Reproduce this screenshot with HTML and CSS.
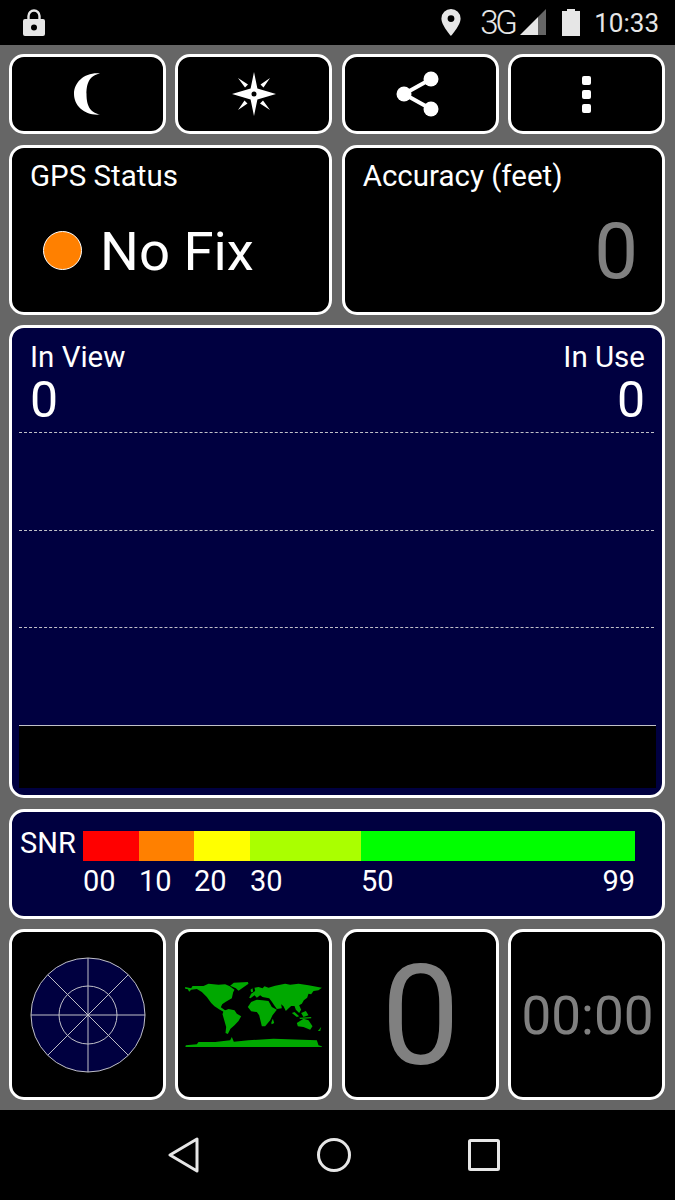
FILE: index.html
```html
<!DOCTYPE html>
<html lang="en">
<head>
    <meta charset="UTF-8">
    <meta name="viewport" content="width=device-width, initial-scale=1.0">
    <title>GPS Status</title>
    <link rel="stylesheet" href="styles.css">
</head>
<body>
    <div class="status-bar">
        <svg class="lock-icon" width="22" height="27" viewBox="0 0 22 27">
            <path fill="none" stroke="#e6e6e6" stroke-width="2.4" d="M5.500 11V7a5.500 5.500 0 0 1 11 0v4"/>
            <path fill="#e6e6e6" fill-rule="evenodd" d="M2 10h18a2 2 0 0 1 2 2v13a2 2 0 0 1-2 2H2a2 2 0 0 1-2-2V12a2 2 0 0 1 2-2zM11 15.500a3 3 0 1 0 0 6 3 3 0 0 0 0-6z"/>
        </svg>
        <svg class="pin-icon" width="20" height="27" viewBox="0 0 20 27">
            <path fill="#e6e6e6" fill-rule="evenodd" d="M10 0a9.600 9.600 0 0 1 9.600 9.600C19.600 16.500 10 27 10 27S.4 16.500.4 9.600A9.600 9.600 0 0 1 10 0zM10 6.200a3.400 3.400 0 1 0 0 6.800 3.400 3.400 0 0 0 0-6.800z"/>
        </svg>
        <span class="net-label">3G</span>
        <svg class="signal-icon" width="27" height="27" viewBox="0 0 27 27">
            <path fill="#666" d="M26 0v26H18V8z"/>
            <path fill="#e6e6e6" d="M18 8v18H0z"/>
        </svg>
        <svg class="battery-icon" width="18" height="27" viewBox="0 0 18 27">
            <path fill="#e6e6e6" d="M5 2V0h8v2h5v25H0V2z"/>
        </svg>
        <span class="clock">10:33</span>
    </div>

    <div class="main">
        <div class="card button-card">
            <svg width="30" height="42" viewBox="0 0 30 42">
                <path fill="#fff" d="M27 0.500C15 2.500 13.500 13 13.500 21S15 39.500 27 41.500C12 43 1 33 1 21S12-1 27 0.500z"/>
            </svg>
        </div>
        <div class="card button-card">
            <svg width="44" height="44" viewBox="0 0 44 44">
                <path fill="#fff" fill-rule="evenodd" d="M22 0l3.400 16.500L44 22l-18.600 5.500L22 44l-3.400-16.500L0 22l18.600-5.500zM22 19.500a2.500 2.500 0 1 0 0 5 2.500 2.500 0 0 0 0-5z"/>
                <path fill="#fff" d="M6 6l10 6.500-3 3zM38 6l-6.500 9.500-3-3zM6 38l6.500-9.500 3 3zM38 38l-10-6.500 3-3z"/>
            </svg>
        </div>
        <div class="card button-card">
            <svg class="share-icon" width="44" height="46" viewBox="0 0 44 46">
                <path fill="none" stroke="#fff" stroke-width="4" d="M35 8L8 23l27 15"/>
                <circle fill="#fff" cx="35" cy="8" r="7.500"/>
                <circle fill="#fff" cx="8" cy="23" r="7.500"/>
                <circle fill="#fff" cx="35" cy="38" r="7.500"/>
            </svg>
        </div>
        <div class="card button-card">
            <div class="dots"><span></span><span></span><span></span></div>
        </div>

        <div class="card wide info-card">
            <div class="info-title">GPS Status</div>
            <div class="fix-row">
                <span class="fix-dot"></span>
                <span class="fix-text">No Fix</span>
            </div>
        </div>
        <div class="card wide info-card">
            <div class="info-title">Accuracy (feet)</div>
            <div class="accuracy-value">0</div>
        </div>

        <div class="card full chart-card">
            <div class="chart-labels">
                <span>In View</span>
                <span>In Use</span>
            </div>
            <div class="chart-counts">
                <span>0</span>
                <span>0</span>
            </div>
            <div class="chart-row"></div>
            <div class="chart-row"></div>
            <div class="chart-row"></div>
            <div class="chart-base"></div>
        </div>

        <div class="card full snr-card">
            <div class="snr-name">SNR</div>
            <div class="snr-scale">
                <div class="red"></div>
                <div class="orange"></div>
                <div class="yellow"></div>
                <div class="lime"></div>
                <div class="green"></div>
                <span>00</span>
                <span>10</span>
                <span>20</span>
                <span>30</span>
                <span class="snr-last"><span>50</span><span>99</span></span>
            </div>
        </div>

        <div class="card tile">
            <svg width="116" height="116" viewBox="0 0 116 116">
                <circle cx="58" cy="58" r="57" fill="#000040" stroke="#c0c0c8" stroke-width="1"/>
                <circle cx="58" cy="58" r="29" fill="none" stroke="#c0c0c8" stroke-width="1"/>
                <path fill="none" stroke="#c0c0c8" stroke-width="1" d="M58 1v114M1 58h114M17.700 17.700l80.600 80.600M98.300 17.700l-80.600 80.600"/>
            </svg>
        </div>
        <div class="card tile">
            <svg width="137" height="65" viewBox="30 25 410 195">
                <g fill="#00a800">
                    <path d="M30 40 48 44 52 37 85 37 100 30 130 33 150 32 164 38 178 48 174 56 170 74 152 84 141 92 137 101 156 114 148 116 134 108 118 98 108 88 95 70 80 55 65 46 48 48 42 54 38 47 30 45Z"/>
                    <path d="M165 36 176 27 218 25 220 30 205 41 190 51 182 44Z"/>
                    <path d="M145 112 160 106 178 110 185 120 198 128 190 142 178 155 166 165 158 181 151 178 153 160 146 135 142 122Z"/>
                    <path d="M222 72 228 60 240 52 238 42 250 40 262 44 268 38 280 42 300 36 330 30 345 33 370 30 400 35 440 42 430 50 415 52 408 62 400 60 396 72 386 80 380 90 372 95 378 108 372 118 362 108 358 97 348 97 338 106 332 112 325 98 318 92 320 104 305 106 298 96 290 84 282 74 262 70 255 65 245 72 238 65 226 74Z"/>
                    <path d="M226 48 232 44 234 54 228 56Z"/>
                    <path d="M218 100 228 85 245 78 262 80 280 82 290 100 305 108 292 125 285 140 270 158 260 158 252 125 245 115 228 113Z"/>
                    <path d="M365 148 385 135 400 140 412 158 405 168 385 160 368 158Z"/>
                    <path d="M288 148 293 135 297 148 290 152Z"/>
                    <path d="M428 172 438 160 435 172Z"/>
                    <path d="M350 118 358 115 372 128 365 130ZM378 118 392 112 400 125 385 130ZM372 132 408 130 408 134 375 136Z"/>
                    <path d="M30 222 32 215 65 212 70 205 120 205 165 200 170 190 176 204 220 200 295 195 425 200 430 215 440 218 440 222Z"/>
                </g>
            </svg>
        </div>
        <div class="card tile big-count">0</div>
        <div class="card tile timer">00:00</div>
    </div>

    <div class="nav-bar">
        <div class="nav-cell">
            <svg width="32" height="36" viewBox="0 0 32 36">
                <path fill="none" stroke="#e6e6e6" stroke-width="3" stroke-linejoin="round" d="M2 18L29 2v32z"/>
            </svg>
        </div>
        <div class="nav-cell">
            <svg width="36" height="36" viewBox="0 0 36 36">
                <circle cx="18" cy="18" r="15.500" fill="none" stroke="#e6e6e6" stroke-width="3"/>
            </svg>
        </div>
        <div class="nav-cell">
            <svg width="32" height="32" viewBox="0 0 32 32">
                <rect x="1.500" y="1.500" width="29" height="29" rx="1" fill="none" stroke="#e6e6e6" stroke-width="3"/>
            </svg>
        </div>
    </div>
</body>
</html>
```

FILE: styles.css
```css
* {
    box-sizing: border-box;
}
body {
    margin: 0;
    height: 1200px;
    background-color: #000000;
    color: #ffffff;
    font-family: Roboto, "Noto Sans", sans-serif;
    overflow: hidden;
}
.status-bar {
    height: 45px;
    display: flex;
    align-items: center;
    padding: 0 16px 0 23px;
    color: #e6e6e6;
}
.pin-icon {
    margin-left: auto;
}
.net-label {
    margin-left: 19px;
    font-size: 33px;
    font-weight: 300;
    letter-spacing: -3.500px;
}
.signal-icon {
    margin-left: 6px;
}
.battery-icon {
    margin-left: 15px;
}
.clock {
    margin-left: 14px;
    font-size: 26px;
}
.main {
    height: 1065px;
    background-color: #666666;
    padding: 9px 10px 0 9px;
    display: grid;
    grid-template-columns: repeat(4, 1fr);
    grid-template-rows: 80px 170px 473px 110px 171px;
    column-gap: 9.330px;
    row-gap: 10.500px;
}
.card {
    background-color: #000000;
    border: 3px solid #ffffff;
    border-radius: 15px;
}
.wide {
    grid-column: span 2;
}
.full {
    grid-column: span 4;
    background-color: #000040;
}
.button-card,
.tile {
    display: flex;
    align-items: center;
    justify-content: center;
}
.share-icon {
    margin-right: 4px;
}
.dots {
    display: flex;
    flex-direction: column;
    gap: 5px;
}
.dots span {
    width: 9px;
    height: 9px;
    border-radius: 2px;
    background-color: #ffffff;
}
.info-card {
    padding: 11px 24px 0 18px;
}
.info-title {
    font-size: 29.500px;
}
.fix-row {
    display: flex;
    align-items: center;
    margin-top: 26px;
    padding-left: 13px;
}
.fix-dot {
    width: 39px;
    height: 39px;
    border-radius: 50%;
    background-color: #ff8000;
    border: 1px solid #ffffff;
}
.fix-text {
    margin-left: 18px;
    font-size: 54.500px;
}
.accuracy-value {
    text-align: right;
    font-size: 78px;
    line-height: 84px;
    color: #808080;
    margin-top: 17px;
}
.chart-card {
    padding: 13px 6px 0 7px;
}
.chart-labels,
.chart-counts {
    display: flex;
    justify-content: space-between;
    padding: 0 11px;
}
.chart-labels {
    font-size: 29.500px;
    line-height: 32px;
}
.chart-counts {
    font-size: 50px;
    line-height: 54px;
    margin-bottom: 5px;
}
.chart-row {
    height: 97.500px;
    border-top: 1px dashed #c0c0c8;
    margin-right: 2px;
}
.chart-base {
    height: 63px;
    background-color: #000000;
    border-top: 1px solid #c0c0c8;
}
.snr-card {
    padding: 19.500px 27px 0 8px;
    display: flex;
}
.snr-name {
    font-size: 29px;
    line-height: 24px;
    width: 63px;
}
.snr-scale {
    flex: 1;
    display: grid;
    grid-template-columns: 56px 55px 56px 111px 1fr;
    grid-template-rows: 30px 40px;
    font-size: 29px;
}
.snr-scale > span {
    align-self: center;
}
.snr-last {
    display: flex;
    justify-content: space-between;
}
.red {
    background-color: #ff0000;
}
.orange {
    background-color: #ff8000;
}
.yellow {
    background-color: #ffff00;
}
.lime {
    background-color: #aaff00;
}
.green {
    background-color: #00ff00;
}
.big-count {
    padding: 2px 0 0 1px;
    font-size: 140px;
    color: #808080;
}
.timer {
    padding: 2px 0 0 2px;
    font-size: 53px;
    color: #808080;
}
.nav-bar {
    height: 90px;
    display: flex;
    justify-content: center;
    align-items: center;
    padding-right: 7px;
}
.nav-cell {
    width: 150px;
    display: flex;
    justify-content: center;
}
```
